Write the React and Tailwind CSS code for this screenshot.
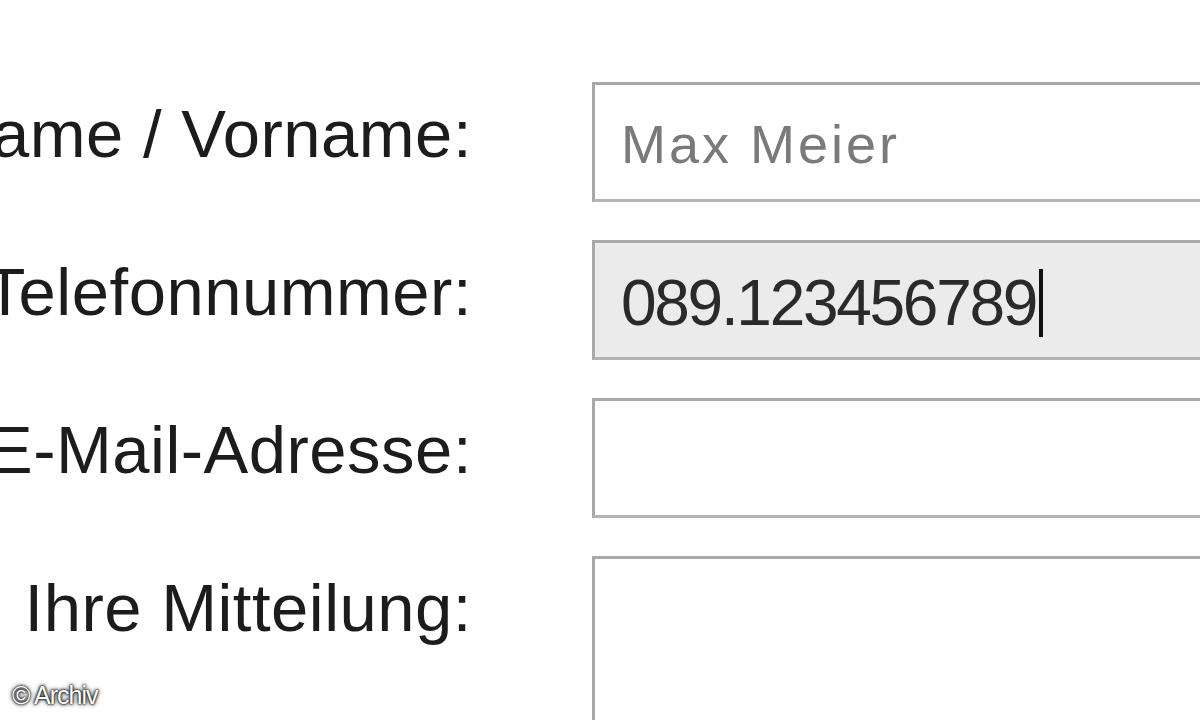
const fields = [
  { label: 'Name / Vorname:', value: 'Max Meier', kind: 'placeholder' },
  { label: 'Telefonnummer:', value: '089.123456789', kind: 'focused' },
  { label: 'E-Mail-Adresse:', value: '', kind: 'empty' },
  { label: 'Ihre Mitteilung:', value: '', kind: 'textarea' },
];

const Field = ({ field }) => {
  const box =
    field.kind === 'focused' ? 'bg-[#ebebeb]' : 'bg-white';
  const height = field.kind === 'textarea' ? 'h-[260px]' : 'h-[120px]';

  return (
    <div className="flex items-start">
      {/* label column, overflows to the left like the crop */}
      <div className="w-[472px] h-[120px] flex justify-end items-center shrink-0">
        <span className="whitespace-nowrap text-[67px] leading-none text-[#1c1c1c] tracking-[0.5px] pb-[18px]">
          {field.label}
        </span>
      </div>
      <div
        className={`ml-[120px] w-[720px] shrink-0 ${height} ${box} border-[3px] border-[#b4b4b4] border-t-[#a9a9a9] border-l-[#a9a9a9] flex items-center pl-[26px]`}
      >
        {field.kind === 'placeholder' && (
          <span className="text-[54px] leading-none text-[#7a7a7a] tracking-[3px] pt-[4px]">
            {field.value}
          </span>
        )}
        {field.kind === 'focused' && (
          <div className="flex items-center pt-[6px]">
            <span className="text-[64px] leading-none text-[#2a2a2a] tracking-[-2.3px]">
              {field.value}
            </span>
            <span className="ml-[3px] w-[4px] h-[68px] bg-[#111]" />
          </div>
        )}
      </div>
    </div>
  );
};

export default function App() {
  return (
    <div
      className="relative w-[1200px] h-[720px] overflow-hidden bg-white"
      style={{ fontFamily: '"Liberation Sans", Arial, sans-serif' }}
    >
      <div className="flex flex-col gap-[38px] pt-[82px]">
        {fields.map((f) => (
          <Field key={f.label} field={f} />
        ))}
      </div>

      <span className="absolute left-[12px] top-[683px] text-[25px] leading-none text-white tracking-[-1px] [text-shadow:0_0_3px_#000,0_0_5px_#222,0_0_2px_#000]">
        © Archiv
      </span>
    </div>
  );
}
